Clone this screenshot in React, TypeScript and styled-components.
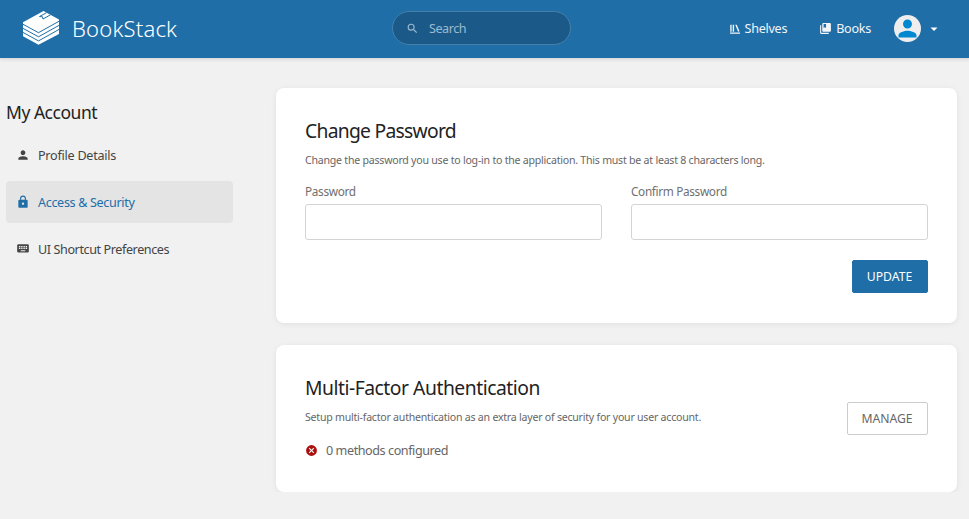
import React from "react";
import styled, { createGlobalStyle } from "styled-components";

const GlobalStyle = createGlobalStyle`
  * { box-sizing: border-box; }
  body { margin: 0; background: #f1f1f1; font-family: "Noto Sans", sans-serif; font-size: 12.6px; color: #555; }
  h1, h2, p { margin: 0; font-weight: 400; }
  svg { display: block; flex: none; }
`;

const Header = styled.header`
  display: grid;
  grid-template-columns: 392px 179px 1fr;
  align-items: center;
  height: 58px;
  padding-bottom: 1px;
  background: #206ea7;
  box-shadow: 0 0 4px 1px rgba(0, 0, 0, 0.14);
  color: #fff;
`;
const Brand = styled.div`
  display: flex;
  align-items: center;
  gap: 12px;
  height: 36px;
  margin-top: -2px;
  padding-left: 22px;
  font-size: 22px;
  letter-spacing: 0.2px;
  font-weight: 300;
`;
const SearchBox = styled.div`
  display: flex;
  align-items: center;
  gap: 10px;
  height: 34px;
  margin-top: -1px;
  padding-left: 13px;
  border: 1px solid #4480a9;
  border-radius: 17px;
  background: #1b5a88;
  color: #9dbbd0;
  letter-spacing: -0.45px;
`;
const Nav = styled.nav`
  display: flex;
  justify-content: flex-end;
  align-items: center;
  padding-right: 28px;
`;
const NavLink = styled.div<{ $after: number }>`
  display: flex;
  align-items: center;
  gap: 4px;
  margin-right: ${(p) => p.$after}px;
  color: #f1f5f9;
  letter-spacing: -0.28px;
`;
const Avatar = styled.div`
  width: 27px;
  height: 27px;
  margin: -1px 6px 0 0;
  border-radius: 50%;
  overflow: hidden;
  background: #eee;
`;
const Page = styled.div`
  display: grid;
  grid-template-columns: 227px 681px;
  column-gap: 43px;
  align-items: start;
  padding: 30px 0 0 6px;
`;
const Sidebar = styled.aside`
  display: flex;
  flex-direction: column;
  padding-top: 12px;
`;
const SideTitle = styled.h1`
  height: 29px;
  line-height: 24px;
  margin-bottom: 5px;
  color: #222;
  font-size: 17.5px;
  letter-spacing: -0.48px;
`;
const SideItem = styled.div<{ $active?: boolean; $spacing: number }>`
  display: flex;
  align-items: center;
  gap: 8px;
  height: 42px;
  margin-bottom: 5px;
  padding-left: 10px;
  border-radius: 4px;
  background: ${(p) => (p.$active ? "#e4e4e4" : "transparent")};
  color: ${(p) => (p.$active ? "#206ea7" : "#444")};
  letter-spacing: ${(p) => p.$spacing}px;
`;
const Cards = styled.main`
  display: flex;
  flex-direction: column;
  gap: 22px;
`;
const Card = styled.section<{ $height: number }>`
  height: ${(p) => p.$height}px;
  padding: 29px;
  border-radius: 8px;
  background: #fff;
  box-shadow: 0 1px 6px -1px rgba(0, 0, 0, 0.1);
`;
const Title = styled.h2<{ $spacing: number }>`
  height: 30px;
  line-height: 27px;
  color: #222;
  font-size: 19.3px;
  letter-spacing: ${(p) => p.$spacing}px;
`;
const Description = styled.p`
  height: 27px;
  line-height: 26px;
  color: #666;
  font-size: 10.6px;
  letter-spacing: -0.237px;
  white-space: nowrap;
`;
const Fields = styled.div`
  display: grid;
  grid-template-columns: 297px 297px;
  column-gap: 29px;
  margin-top: 8px;
`;
const Label = styled.label`
  display: block;
  height: 22px;
  line-height: 19px;
  color: #707070;
  font-size: 11.8px;
  letter-spacing: -0.34px;
`;
const Input = styled.input`
  display: block;
  width: 100%;
  height: 36px;
  border: 1px solid #d4d4d4;
  border-radius: 3px;
  background: #fff;
`;
const Actions = styled.div`
  display: flex;
  justify-content: flex-end;
  margin-top: 20px;
`;
const Button = styled.button<{ $primary?: boolean }>`
  width: ${(p) => (p.$primary ? 76 : 81)}px;
  height: 33px;
  padding: 0 1px 0 0;
  border: 1px solid ${(p) => (p.$primary ? "#206ea7" : "#ccc")};
  border-radius: 2px;
  background: ${(p) => (p.$primary ? "#206ea7" : "#fff")};
  color: ${(p) => (p.$primary ? "#fff" : "#666")};
  font-family: inherit;
  font-size: 12.2px;
  letter-spacing: ${(p) => (p.$primary ? 0 : -0.08)}px;
`;
const Split = styled.div`
  display: flex;
  justify-content: space-between;
  align-items: flex-start;

  ${Button} {
    margin-top: 28px;
  }
`;
const Status = styled.div`
  display: flex;
  align-items: center;
  gap: 8px;
  height: 22px;
  margin-top: 8px;
  color: #666;
  letter-spacing: -0.43px;
`;

const paths = {
  search: "M15.5 14h-.79l-.28-.27A6.47 6.47 0 0 0 16 9.5 6.5 6.5 0 1 0 9.5 16c1.61 0 3.09-.59 4.23-1.57l.27.28v.79l5 4.99L20.49 19zm-6 0a4.5 4.5 0 1 1 0-9 4.5 4.5 0 0 1 0 9z",
  shelves: "M2 19h20v2.300H2zM2.500 3.500h2.800v14H2.500zM7.400 3.500h2.800v14H7.400zM12.500 3.500h3L21 16.700l-2.800 1z",
  books: "M4 6H2v14c0 1.100.9 2 2 2h14v-2H4zM20 2H8a2 2 0 0 0-2 2v12c0 1.100.9 2 2 2h12a2 2 0 0 0 2-2V4a2 2 0 0 0-2-2zM8.500 3.500h4.500V11l-2.250-1.500L8.500 11z",
  person: "M12 12c2.210 0 4-1.790 4-4s-1.790-4-4-4-4 1.790-4 4 1.790 4 4 4zm0 2c-2.670 0-8 1.340-8 4v2h16v-2c0-2.660-5.330-4-8-4z",
  lock: "M18 8h-1V6A5 5 0 0 0 7 6v2H6a2 2 0 0 0-2 2v10c0 1.100.9 2 2 2h12a2 2 0 0 0 2-2V10a2 2 0 0 0-2-2zm-6 9a2 2 0 1 1 0-4 2 2 0 0 1 0 4zM15.100 8H8.900V6a3.100 3.100 0 0 1 6.200 0z",
  keyboard: "M20 4H4a2 2 0 0 0-2 2v10c0 1.100.9 2 2 2h16a2 2 0 0 0 2-2V6a2 2 0 0 0-2-2zm-9 3h2v2h-2zm0 3h2v2h-2zM8 7h2v2H8zm0 3h2v2H8zm-1 2H5v-2h2zm0-3H5V7h2zm9 7H8v-2h8zm0-4h-2v-2h2zm0-3h-2V7h2zm3 3h-2v-2h2zm0-3h-2V7h2z",
  caret: "M6 9.500l6 6 6-6z",
  cancel: "M12 2a10 10 0 1 0 0 20 10 10 0 0 0 0-20zm5 13.590L15.590 17 12 13.410 8.410 17 7 15.590 10.590 12 7 8.410 8.410 7 12 10.590 15.590 7 17 8.410 13.410 12z",
};

function Icon({ name, size = 14, color = "currentColor" }: { name: keyof typeof paths; size?: number; color?: string }) {
  return (
    <svg width={size} height={size} viewBox="0 0 24 24" fill={color} fillRule="evenodd">
      <path d={paths[name]} />
    </svg>
  );
}

function Logo() {
  return (
    <svg width="38" height="36" viewBox="0 0 38 36">
      <path d="M1 12.200 21.500 1 37 9.500v14.500L16.500 34.800 1 26.200z" fill="#fff" />
      <g fill="none" stroke="#206ea7" strokeWidth="1">
        <path d="M0 13.700 16.500 22.700 38 10.700M0 17.800 16.500 26.800 38 14.800M0 21.900 16.500 30.900 38 18.900" />
        <path d="M24.500 2.700 17.500 6.500l3 .3.500 2.200 7.500-4.200" />
      </g>
    </svg>
  );
}

export default function App() {
  return (
    <>
      <GlobalStyle />
      <Header>
        <Brand><Logo />BookStack</Brand>
        <SearchBox><Icon name="search" size={13} />Search</SearchBox>
        <Nav>
          <NavLink $after={32}><Icon name="shelves" size={12} />Shelves</NavLink>
          <NavLink $after={23}><Icon name="books" size={13} />Books</NavLink>
          <Avatar><Icon name="person" size={27} color="#0288d1" /></Avatar>
          <Icon name="caret" />
        </Nav>
      </Header>
      <Page>
        <Sidebar>
          <SideTitle>My Account</SideTitle>
          <SideItem $spacing={-0.25}><Icon name="person" />Profile Details</SideItem>
          <SideItem $active $spacing={-0.34}><Icon name="lock" />Access &amp; Security</SideItem>
          <SideItem $spacing={-0.41}><Icon name="keyboard" />UI Shortcut Preferences</SideItem>
        </Sidebar>
        <Cards>
          <Card $height={235}>
            <Title $spacing={-0.72}>Change Password</Title>
            <Description>Change the password you use to log-in to the application. This must be at least 8 characters long.</Description>
            <Fields>
              <div><Label htmlFor="password">Password</Label><Input id="password" type="password" /></div>
              <div><Label htmlFor="confirm">Confirm Password</Label><Input id="confirm" type="password" /></div>
            </Fields>
            <Actions><Button $primary>UPDATE</Button></Actions>
          </Card>
          <Card $height={147}>
            <Split>
              <div>
                <Title $spacing={-0.47}>Multi-Factor Authentication</Title>
                <Description>Setup multi-factor authentication as an extra layer of security for your user account.</Description>
                <Status><Icon name="cancel" size={13} color="#ab0f0e" />0 methods configured</Status>
              </div>
              <Button>MANAGE</Button>
            </Split>
          </Card>
        </Cards>
      </Page>
    </>
  );
}
